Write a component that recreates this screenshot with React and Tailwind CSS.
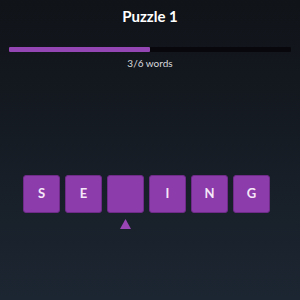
export default function App() {
  const letters = ['S', 'E', '', 'I', 'N', 'G']
  const active = 2

  return (
    <div className="w-[300px] h-[300px] flex flex-col bg-gradient-to-b from-[#101318] to-[#1c2632] text-white" style={{ fontFamily: '"Lato", "Open Sans", sans-serif' }}>
      <div className="pt-[6px] text-center text-[15px] font-bold leading-[20px]">Puzzle 1</div>
      <div className="mx-[9px] mt-[21px] h-[5px] bg-[#08080c] rounded-[1px]">
        <div className="h-full w-1/2 bg-[#9446b4] rounded-[1px]" />
      </div>
      <div className="mt-[4px] text-center text-[10px] leading-[14px] text-[#d9d9de]">3/6 words</div>
      <div className="mt-[105px] flex justify-center gap-[5px] pr-[7px]">
        {letters.map((l, i) => (
          <div key={i} className="flex flex-col items-center">
            <div className="w-[37px] h-[38px] rounded-[3px] bg-[#8c3cab] border border-[#6e2b88] flex items-center justify-center text-[13px] font-bold text-[#f5e8f8]">
              {l}
            </div>
            {i === active && (
              <svg className="mt-[6px]" width="11" height="10" viewBox="0 0 11 10">
                <polygon points="5.5,0 11,10 0,10" fill="#9a45b6" />
              </svg>
            )}
          </div>
        ))}
      </div>
    </div>
  )
}
